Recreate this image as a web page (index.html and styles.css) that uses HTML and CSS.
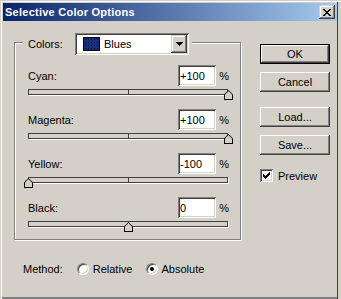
FILE: index.html
```html
<!DOCTYPE html>
<html lang="en">
<head>
  <meta charset="UTF-8">
  <meta name="viewport" content="width=device-width, initial-scale=1.0">
  <title>Selective Color Options</title>
  <link rel="stylesheet" href="styles.css">
</head>
<body>
  <div class="window">
    <div class="title-bar">
      <span class="title-text">Selective Color Options</span>
      <button class="close-button" aria-label="Close">
        <svg width="8" height="7" viewBox="0 0 8 7" shape-rendering="crispEdges">
          <rect x="0" y="0" width="2" height="1"/><rect x="6" y="0" width="2" height="1"/>
          <rect x="1" y="1" width="2" height="1"/><rect x="5" y="1" width="2" height="1"/>
          <rect x="2" y="2" width="4" height="1"/>
          <rect x="3" y="3" width="2" height="1"/>
          <rect x="2" y="4" width="4" height="1"/>
          <rect x="1" y="5" width="2" height="1"/><rect x="5" y="5" width="2" height="1"/>
          <rect x="0" y="6" width="2" height="1"/><rect x="6" y="6" width="2" height="1"/>
        </svg>
      </button>
    </div>

    <div class="main">
      <div class="left-col">
        <div class="group">
          <div class="group-head">
            <span class="head-label">Colors:</span>
            <div class="combo">
              <span class="swatch"></span>
              <span class="combo-text">Blues</span>
              <span class="combo-button">
                <svg width="7" height="4" viewBox="0 0 7 4" shape-rendering="crispEdges">
                  <rect x="0" y="0" width="7" height="1"/>
                  <rect x="1" y="1" width="5" height="1"/>
                  <rect x="2" y="2" width="3" height="1"/>
                  <rect x="3" y="3" width="1" height="1"/>
                </svg>
              </span>
            </div>
          </div>

          <div class="channels">
            <div class="channel">
              <div class="channel-top">
                <span class="channel-label">Cyan:</span>
                <input class="field" type="text" value="+100">
                <span class="pct">%</span>
              </div>
              <div class="track"><span class="thumb" style="left: 196px"></span></div>
            </div>
            <div class="channel">
              <div class="channel-top">
                <span class="channel-label">Magenta:</span>
                <input class="field" type="text" value="+100">
                <span class="pct">%</span>
              </div>
              <div class="track"><span class="thumb" style="left: 196px"></span></div>
            </div>
            <div class="channel">
              <div class="channel-top">
                <span class="channel-label">Yellow:</span>
                <input class="field" type="text" value="-100">
                <span class="pct">%</span>
              </div>
              <div class="track"><span class="thumb" style="left: -4px"></span></div>
            </div>
            <div class="channel">
              <div class="channel-top">
                <span class="channel-label">Black:</span>
                <input class="field" type="text" value="0">
                <span class="pct">%</span>
              </div>
              <div class="track"><span class="thumb" style="left: 96px"></span></div>
            </div>
          </div>
        </div>

        <div class="method-row">
          <span>Method:</span>
          <span class="radio radio-first"></span>
          <span class="radio-label">Relative</span>
          <span class="radio radio-second checked"></span>
          <span class="radio-label">Absolute</span>
        </div>
      </div>

      <div class="right-col">
        <button class="btn btn-default">OK</button>
        <button class="btn btn-near">Cancel</button>
        <button class="btn btn-far">Load...</button>
        <button class="btn btn-near">Save...</button>
        <div class="check-row">
          <span class="checkbox">
            <svg width="7" height="7" viewBox="0 0 7 7" shape-rendering="crispEdges">
              <path d="M6 0h1v3h-1v1h-1v1h-1v1h-1v1h-1v-1h-1v-1h-1v-3h1v1h1v1h1v-1h1v-1h1z"/>
            </svg>
          </span>
          <span>Preview</span>
        </div>
      </div>
    </div>
  </div>
</body>
</html>
```

FILE: styles.css
```css
body {
  margin: 0;
  font-family: "Liberation Sans", Arial, sans-serif;
  font-size: 11px;
  color: #000;
}
.window {
  width: 341px;
  height: 299px;
  box-sizing: border-box;
  padding: 3px 4px 2px 3px;
  background: #d4d0c8;
  overflow: hidden;
  box-shadow: inset 1px 1px #d4d0c8, inset 2px 2px #fff,
    inset -3px 0 #d4d0c8, inset -4px 0 #2e3f78, inset 0 -2px #808080;
}
.title-bar {
  height: 18px;
  display: flex;
  align-items: center;
  padding: 0 2px;
  background: linear-gradient(to right, #0a246a, #a6caf0);
}
.title-text {
  color: #fff;
  font-weight: bold;
  letter-spacing: 0.25px;
}
.close-button {
  width: 16px;
  height: 14px;
  margin-left: auto;
  padding: 0;
  border: 0;
  display: flex;
  align-items: center;
  justify-content: center;
  background: #d4d0c8;
  box-shadow: inset -1px -1px #404040, inset 1px 1px #d4d0c8,
    inset -2px -2px #808080, inset 2px 2px #fff;
}
.main {
  display: flex;
  padding: 21px 0 0 11px;
}
.left-col {
  width: 228px;
}
.group {
  width: 227px;
  height: 198px;
  box-sizing: border-box;
  padding: 0 11px 0 13px;
  border: 1px solid #808080;
  box-shadow: inset 1px 1px #fff, 1px 1px #fff;
}
.group-head {
  display: flex;
  align-items: center;
  width: fit-content;
  height: 22px;
  margin: -10px 0 0 -5px;
  padding: 0 3px 0 5px;
  background: #d4d0c8;
}
.head-label {
  width: 47px;
}
.combo {
  width: 114px;
  height: 22px;
  box-sizing: border-box;
  padding: 2px;
  display: flex;
  align-items: center;
  background: #fff;
  box-shadow: inset 1px 1px #808080, inset -1px -1px #fff,
    inset 2px 2px #404040, inset -2px -2px #d4d0c8;
}
.swatch {
  width: 17px;
  height: 14px;
  box-sizing: border-box;
  margin-left: 6px;
  border: 1px solid #000;
  background: radial-gradient(circle, #06123c 0.7px, transparent 0.9px) 0 0 / 3px 3px, #14307a;
}
.combo-text {
  margin-left: 4px;
}
.combo-button {
  width: 16px;
  height: 18px;
  margin-left: auto;
  display: flex;
  align-items: center;
  justify-content: center;
  background: #d4d0c8;
  box-shadow: inset -1px -1px #404040, inset 1px 1px #d4d0c8,
    inset -2px -2px #808080, inset 2px 2px #fff;
}
.channels {
  margin-top: 10px;
}
.channel + .channel {
  margin-top: 14px;
}
.channel-top {
  display: flex;
  align-items: center;
  height: 21px;
}
.channel-label {
  flex: 1;
}
.field {
  width: 38px;
  height: 21px;
  box-sizing: border-box;
  margin: 0;
  padding: 0 0 0 2px;
  border: 0;
  outline: none;
  font: inherit;
  color: #000;
  background: #fff;
  box-shadow: inset 1px 1px #808080, inset -1px -1px #fff,
    inset 2px 2px #404040, inset -2px -2px #d4d0c8;
}
.pct {
  width: 13px;
  text-align: right;
}
.track {
  position: relative;
  width: 200px;
  height: 6px;
  margin-top: 3px;
  box-sizing: border-box;
  background: #d4d0c8;
  box-shadow: inset 0 0 0 1px #404040, 1px 1px #fff;
}
.track::after {
  content: "";
  position: absolute;
  left: 100px;
  top: 0;
  width: 1px;
  height: 6px;
  background: #404040;
}
.thumb {
  position: absolute;
  top: 1px;
  width: 9px;
  height: 10px;
  z-index: 1;
  background: #000;
  clip-path: polygon(50% 0, 100% 45%, 100% 100%, 0 100%, 0 45%);
}
.thumb::after {
  content: "";
  position: absolute;
  left: 1px;
  top: 1px;
  width: 7px;
  height: 8px;
  background: #d4d0c8;
  clip-path: polygon(50% 0, 100% 45%, 100% 100%, 0 100%, 0 45%);
}
.method-row {
  display: flex;
  align-items: center;
  height: 13px;
  margin: 22px 0 0 9px;
}
.radio {
  position: relative;
  width: 12px;
  height: 12px;
  box-sizing: border-box;
  border-radius: 50%;
  border: 1px solid;
  border-color: #808080 #fff #fff #808080;
  background: #fff;
  box-shadow: inset 1px 1px #404040, inset -1px -1px #d4d0c8;
}
.radio-first {
  margin-left: 14px;
}
.radio-second {
  margin-left: 13px;
}
.radio.checked::after {
  content: "";
  position: absolute;
  left: 3px;
  top: 3px;
  width: 4px;
  height: 4px;
  border-radius: 50%;
  background: #000;
}
.radio-label {
  margin-left: 4px;
}
.right-col {
  display: flex;
  flex-direction: column;
  width: 70px;
  margin-left: 18px;
  padding-top: 2px;
}
.btn {
  width: 70px;
  height: 20px;
  margin: 0;
  padding: 0;
  border: 0;
  font: inherit;
  color: #000;
  background: #d4d0c8;
  box-shadow: inset -1px -1px #404040, inset 1px 1px #fff,
    inset -2px -2px #808080;
}
.btn-default {
  box-shadow: inset 0 0 0 1px #000, inset -2px -2px #404040,
    inset 2px 2px #fff, inset -3px -3px #808080;
}
.btn-near {
  margin-top: 8px;
}
.btn-far {
  margin-top: 15px;
}
.check-row {
  display: flex;
  align-items: center;
  gap: 5px;
  margin-top: 14px;
}
.checkbox {
  width: 13px;
  height: 13px;
  display: flex;
  align-items: center;
  justify-content: center;
  background: #fff;
  box-shadow: inset 1px 1px #808080, inset -1px -1px #fff,
    inset 2px 2px #404040, inset -2px -2px #d4d0c8;
}
```
